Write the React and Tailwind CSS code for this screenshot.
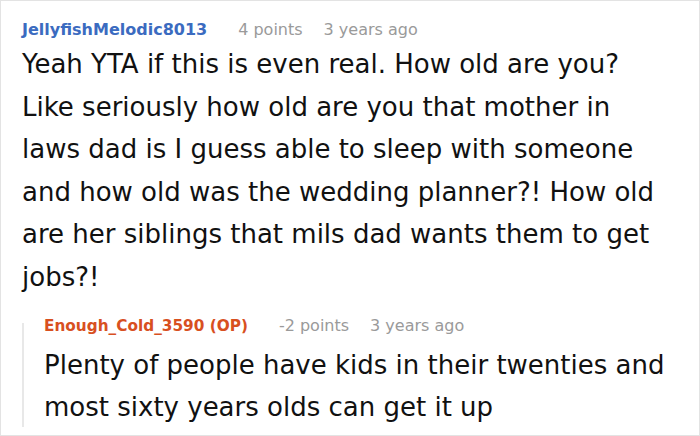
export default function App() {
  return (
    <div
      className="w-[700px] h-[436px] bg-white border border-[#e3e3e3] overflow-hidden"
      style={{ fontFamily: '"DejaVu Sans", sans-serif' }}
    >
      <div className="pl-[21px] pr-[29px] pt-[17px]">
        <div className="flex items-baseline text-[16px] leading-[24px]">
          <span className="font-bold text-[#3b6bc0]">JellyfishMelodic8013</span>
          <span className="ml-[31px] text-[#9a9a9a]">4 points</span>
          <span className="ml-[21px] text-[#9a9a9a]">3 years ago</span>
        </div>
        <p className="mt-[1px] text-[26px] leading-[42.6px] text-[#111]">
          Yeah YTA if this is even real. How old are you? Like seriously how old are you that mother in laws dad is I guess able to sleep with someone and how old was the wedding planner?! How old are her siblings that mils dad wants them to get jobs?!
        </p>
        <div className="mt-[15px] flex">
          <div className="w-[2px] self-stretch mt-[9px] mb-[2px] bg-[#e8e8e8]" />
          <div className="pl-[20px] flex-1">
            <div className="flex items-baseline text-[16px] leading-[24px]">
              <span className="font-bold text-[15.3px] text-[#d8501f]">Enough_Cold_3590 (OP)</span>
              <span className="ml-[31px] text-[#9a9a9a]">-2 points</span>
              <span className="ml-[21px] text-[#9a9a9a]">3 years ago</span>
            </div>
            <p className="mt-[6px] text-[26px] leading-[42.6px] text-[#111]">
              Plenty of people have kids in their twenties and most sixty years olds can get it up
            </p>
          </div>
        </div>
      </div>
    </div>
  );
}
